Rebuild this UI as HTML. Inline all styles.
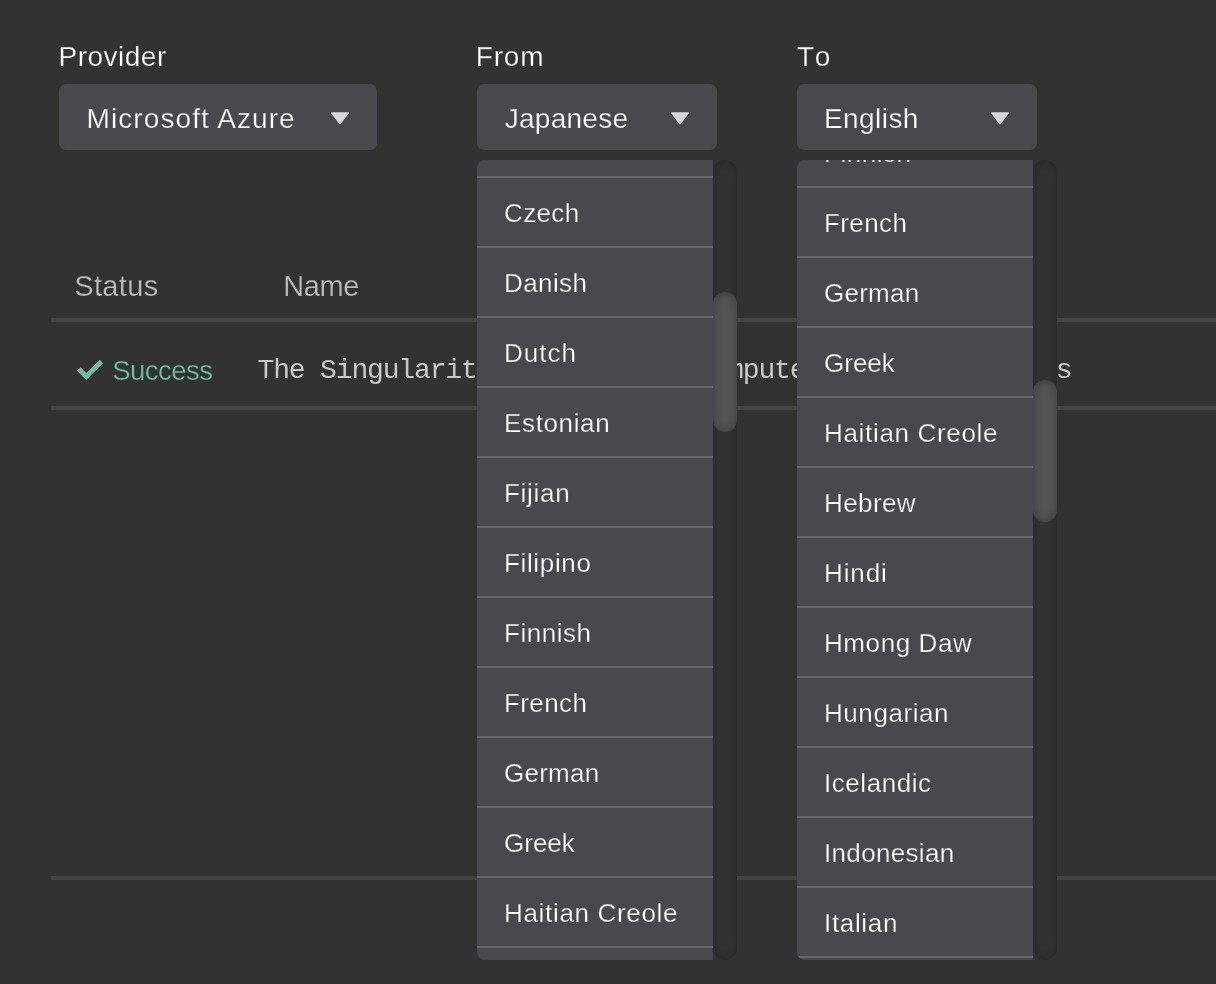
<!DOCTYPE html>
<html><head><meta charset="utf-8">
<style>
*{box-sizing:border-box;margin:0;padding:0}
html,body{width:1216px;height:984px;overflow:hidden;background:#323232;font-family:"Liberation Sans",sans-serif;color:#fff}
.abs{position:absolute}
.t{position:absolute;line-height:40px;white-space:pre;font-family:"Liberation Sans",sans-serif}
.sel{position:absolute;top:84px;height:66px;background:#48494d;border-radius:7px}
.tri{position:absolute;top:110.5px;width:20px;height:14px}
.hl{position:absolute;left:51px;width:1165px;height:4px;background:#434343}
.list{position:absolute;top:160px;width:236px;height:800px;background:#48494d;border-radius:8px 0 0 8px;overflow:hidden}
.sep{position:absolute;left:0;width:236px;height:2px;background:#65666a}
.track{position:absolute;top:160px;width:24px;height:800px;background:#333;border-radius:12px;box-shadow:inset 0 0 12px rgba(0,0,0,.3)}
.thumb{position:absolute;width:24px;background:#555;border-radius:12px;box-shadow:inset 0 0 12px rgba(0,0,0,.3)}
.mono{position:absolute;left:257.5px;top:350.75px;font-family:"Liberation Mono",monospace;font-size:28px;line-height:40px;color:#c9c9c9;white-space:pre;letter-spacing:-1.15px}
#w{position:absolute;left:0;top:0;width:1216px;height:984px;will-change:transform;overflow:hidden}
</style></head><body><div id="w">
<div class="sel" style="left:59px;width:318px"></div>
<div class="sel" style="left:477px;width:240px"></div>
<div class="sel" style="left:797px;width:240px"></div>
<svg class="tri" style="left:330px" viewBox="0 0 20 14"><path d="M1.6 1.2 H18.4 Q19.6 1.2 18.9 2.2 L10.7 13.1 Q10 13.9 9.3 13.1 L1.1 2.2 Q0.4 1.2 1.6 1.2Z" fill="#d9d5dc"/></svg>
<svg class="tri" style="left:670px" viewBox="0 0 20 14"><path d="M1.6 1.2 H18.4 Q19.6 1.2 18.9 2.2 L10.7 13.1 Q10 13.9 9.3 13.1 L1.1 2.2 Q0.4 1.2 1.6 1.2Z" fill="#d9d5dc"/></svg>
<svg class="tri" style="left:990px" viewBox="0 0 20 14"><path d="M1.6 1.2 H18.4 Q19.6 1.2 18.9 2.2 L10.7 13.1 Q10 13.9 9.3 13.1 L1.1 2.2 Q0.4 1.2 1.6 1.2Z" fill="#d9d5dc"/></svg>
<div class="t" style="left:58.5px;top:37.25px;font-size:28px;letter-spacing:0.5px;color:#fff;-webkit-text-stroke:0.25px #323232">Provider</div>
<div class="t" style="left:475.75px;top:37.25px;font-size:28px;letter-spacing:0.833px;color:#fff;-webkit-text-stroke:0.25px #323232">From</div>
<div class="t" style="left:796.9px;top:37.25px;font-size:28px;letter-spacing:3.85px;color:#fff;-webkit-text-stroke:0.25px #323232">To</div>
<div class="t" style="left:86.5px;top:98.9px;font-size:28px;letter-spacing:1.089px;color:#fff;-webkit-text-stroke:0.25px #48494d">Microsoft Azure</div>
<div class="t" style="left:504.75px;top:98.9px;font-size:28px;letter-spacing:0.264px;color:#fff;-webkit-text-stroke:0.25px #48494d">Japanese</div>
<div class="t" style="left:824px;top:98.9px;font-size:28px;letter-spacing:0.433px;color:#fff;-webkit-text-stroke:0.25px #48494d">English</div>
<div class="t" style="left:74.25px;top:266px;font-size:29px;letter-spacing:0.35px;color:#bdbdbd;-webkit-text-stroke:0.25px #323232">Status</div>
<div class="t" style="left:283.25px;top:266px;font-size:29px;letter-spacing:-0.417px;color:#bdbdbd;-webkit-text-stroke:0.25px #323232">Name</div>
<div class="t" style="left:112.25px;top:351px;font-size:27.5px;letter-spacing:-0.542px;color:#6ebd9f;-webkit-text-stroke:0.25px #323232">Success</div>
<div class="hl" style="top:318px"></div>
<div class="hl" style="top:406px"></div>
<div class="hl" style="top:876px"></div>
<svg class="abs" style="left:0;top:0;width:1216px;height:984px" viewBox="0 0 1216 984"><polygon points="76.9,370.75 80.6,367.25 86.25,372.9 99.75,359.75 103.1,363.25 86.25,380" fill="#6ebd9f"/></svg>
<div class="mono">The Singularity is Near and Computers Exceed Mortals</div>
<div class="list" style="left:477px">
<div class="sep" style="top:16px"></div><div class="sep" style="top:86px"></div><div class="sep" style="top:156px"></div><div class="sep" style="top:226px"></div><div class="sep" style="top:296px"></div><div class="sep" style="top:366px"></div><div class="sep" style="top:436px"></div><div class="sep" style="top:506px"></div><div class="sep" style="top:576px"></div><div class="sep" style="top:646px"></div><div class="sep" style="top:716px"></div><div class="sep" style="top:786px"></div>
<div class="t" style="left:27px;top:33px;font-size:26px;letter-spacing:0.375px;color:#fff;-webkit-text-stroke:0.25px #48494d">Czech</div>
<div class="t" style="left:27px;top:103px;font-size:26px;letter-spacing:0.4px;color:#fff;-webkit-text-stroke:0.25px #48494d">Danish</div>
<div class="t" style="left:27px;top:173px;font-size:26px;letter-spacing:1px;color:#fff;-webkit-text-stroke:0.25px #48494d">Dutch</div>
<div class="t" style="left:27px;top:243px;font-size:26px;letter-spacing:0.643px;color:#fff;-webkit-text-stroke:0.25px #48494d">Estonian</div>
<div class="t" style="left:27px;top:313px;font-size:26px;letter-spacing:0.7px;color:#fff;-webkit-text-stroke:0.25px #48494d">Fijian</div>
<div class="t" style="left:27px;top:383px;font-size:26px;letter-spacing:0.643px;color:#fff;-webkit-text-stroke:0.25px #48494d">Filipino</div>
<div class="t" style="left:27px;top:453px;font-size:26px;letter-spacing:0.542px;color:#fff;-webkit-text-stroke:0.25px #48494d">Finnish</div>
<div class="t" style="left:27px;top:523px;font-size:26px;letter-spacing:0.4px;color:#fff;-webkit-text-stroke:0.25px #48494d">French</div>
<div class="t" style="left:27px;top:593px;font-size:26px;letter-spacing:0.25px;color:#fff;-webkit-text-stroke:0.25px #48494d">German</div>
<div class="t" style="left:27px;top:663px;font-size:26px;letter-spacing:0px;color:#fff;-webkit-text-stroke:0.25px #48494d">Greek</div>
<div class="t" style="left:27px;top:733px;font-size:26px;letter-spacing:0.673px;color:#fff;-webkit-text-stroke:0.25px #48494d">Haitian Creole</div>
<div class="t" style="left:27px;top:803px;font-size:26px;letter-spacing:0.4px;color:#fff;-webkit-text-stroke:0.25px #48494d">Hebrew</div>
</div>
<div class="track" style="left:713px"></div>
<div class="thumb" style="left:713px;top:292px;height:140px"></div>
<div class="list" style="left:797px">
<div class="sep" style="top:26px"></div><div class="sep" style="top:96px"></div><div class="sep" style="top:166px"></div><div class="sep" style="top:236px"></div><div class="sep" style="top:306px"></div><div class="sep" style="top:376px"></div><div class="sep" style="top:446px"></div><div class="sep" style="top:516px"></div><div class="sep" style="top:586px"></div><div class="sep" style="top:656px"></div><div class="sep" style="top:726px"></div><div class="sep" style="top:796px"></div>
<div class="t" style="left:27px;top:-27.25px;font-size:26px;letter-spacing:0.542px;color:#fff;-webkit-text-stroke:0.25px #48494d">Finnish</div>
<div class="t" style="left:27px;top:42.75px;font-size:26px;letter-spacing:0.4px;color:#fff;-webkit-text-stroke:0.25px #48494d">French</div>
<div class="t" style="left:27px;top:112.75px;font-size:26px;letter-spacing:0.25px;color:#fff;-webkit-text-stroke:0.25px #48494d">German</div>
<div class="t" style="left:27px;top:182.75px;font-size:26px;letter-spacing:0px;color:#fff;-webkit-text-stroke:0.25px #48494d">Greek</div>
<div class="t" style="left:27px;top:252.75px;font-size:26px;letter-spacing:0.673px;color:#fff;-webkit-text-stroke:0.25px #48494d">Haitian Creole</div>
<div class="t" style="left:27px;top:322.75px;font-size:26px;letter-spacing:0.4px;color:#fff;-webkit-text-stroke:0.25px #48494d">Hebrew</div>
<div class="t" style="left:27px;top:392.75px;font-size:26px;letter-spacing:0.875px;color:#fff;-webkit-text-stroke:0.25px #48494d">Hindi</div>
<div class="t" style="left:27px;top:462.75px;font-size:26px;letter-spacing:0.594px;color:#fff;-webkit-text-stroke:0.25px #48494d">Hmong Daw</div>
<div class="t" style="left:27px;top:532.75px;font-size:26px;letter-spacing:0.562px;color:#fff;-webkit-text-stroke:0.25px #48494d">Hungarian</div>
<div class="t" style="left:27px;top:602.75px;font-size:26px;letter-spacing:0.562px;color:#fff;-webkit-text-stroke:0.25px #48494d">Icelandic</div>
<div class="t" style="left:27px;top:672.75px;font-size:26px;letter-spacing:0.333px;color:#fff;-webkit-text-stroke:0.25px #48494d">Indonesian</div>
<div class="t" style="left:27px;top:742.75px;font-size:26px;letter-spacing:0.667px;color:#fff;-webkit-text-stroke:0.25px #48494d">Italian</div>
</div>
<div class="track" style="left:1033px"></div>
<div class="thumb" style="left:1033px;top:380px;height:142px"></div>
</div></body></html>
